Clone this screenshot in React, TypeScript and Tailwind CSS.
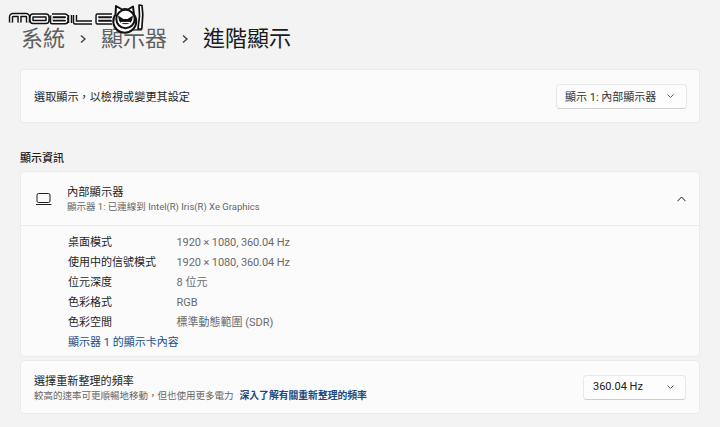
import React from "react";

const font = { fontFamily: 'Roboto, "Noto Sans CJK TC", "Noto Sans", sans-serif' };
const LETTERS =
  "M11 22.500V17a2 2 0 0 1 2-2h13a2 2 0 0 1 2 2v5.500M19.500 15.500V22.500M33 15.500h13a1.500 1.500 0 0 1 1.500 1.500v3.500a1.500 1.500 0 0 1-1.500 1.500H33a1.500 1.500 0 0 1-1.500-1.500V17a1.500 1.500 0 0 1 1.500-1.500zM52 15.500h13a1.700 1.700 0 0 1 0 3.400H53M53 18.900h12a1.700 1.700 0 0 1 0 3.400H52v-6.800M70 15v8M75 15v7.500h17M112 15.500H97.500v7H112M98 18.900h13";

function Logo() {
  return (
    <svg className="absolute left-0 top-0" width="150" height="34" viewBox="0 0 150 34" fill="none">
      <path d={LETTERS} stroke="#111" strokeWidth="4.400" strokeLinejoin="round" />
      <path d={LETTERS} stroke="#fff" strokeWidth="1.500" strokeLinejoin="round" />
      <path d="M116 6l6 3.500a11 11 0 0 1 6 0l5-3 1 8a11.500 11.500 0 1 1-18.500 0z" fill="#fff" stroke="#111" strokeWidth="2" strokeLinejoin="round" />
      <circle cx="125.500" cy="19" r="9.200" fill="#fff" stroke="#111" strokeWidth="2" />
      <path d="M118 15.500l5.500 3.500h4l5.500-3.500-1 5a7.500 7.500 0 0 1-13 0z" fill="#111" />
      <path d="M121 22.500h9" stroke="#fff" strokeWidth="1.200" />
      <path d="M139 5l3 .500.800 9-1 14.500h-3.800l1.500-13z" fill="#fff" stroke="#111" strokeWidth="1.700" strokeLinejoin="round" />
    </svg>
  );
}

function Chevron() {
  return (
    <svg width="7" height="4" viewBox="0 0 7 4" fill="none" className="shrink-0">
      <path d="M.5.5 3.500 3.500l3-3" stroke="#5c5c5c" strokeWidth="1" />
    </svg>
  );
}

function Crumb() {
  return (
    <svg width="6" height="32" viewBox="0 0 6 32" fill="none" className="mx-[15px] shrink-0">
      <path d="M1 12.500l4 3.500-4 3.500" stroke="#3f3f3f" strokeWidth="1.400" />
    </svg>
  );
}

function Row({ label, value, tight = false }: { label: string; value: string; tight?: boolean }) {
  return (
    <div className="flex h-[20px] items-center text-[11px]">
      <div className="w-[108.500px] text-[#1f1f1f]">{label}</div>
      <div className={tight ? "tracking-[-0.1px] text-[#6a6a6a]" : "text-[#6a6a6a]"}>{value}</div>
    </div>
  );
}

export default function App() {
  return (
    <div className="relative h-[427px] w-[720px] overflow-hidden bg-[#f3f3f3]" style={font}>
      <Logo />
      <div className="flex h-[69px] items-start pl-[21px] pt-[23px] text-[22px] leading-[32px]">
        <span className="text-[#5f5f5f]">系統</span>
        <Crumb />
        <span className="text-[#5f5f5f]">顯示器</span>
        <Crumb />
        <span className="text-[#1b1b1b]">進階顯示</span>
      </div>

      <div className="mx-[20px] flex h-[54px] items-center justify-between rounded-[4px] border border-[#ebebeb] bg-[#fbfbfb] pl-[13px] pr-[12px]">
        <span className="pt-[5px] text-[11.150px] text-[#1f1f1f]">選取顯示，以檢視或變更其設定</span>
        <div className="flex h-[25px] w-[131px] items-center justify-between rounded-[4px] border border-[#e8e8e8] border-b-[#cfcfcf] bg-[#fdfdfd] pl-[8px] pr-[12px] text-[11px] text-[#333]">
          <span className="pt-[5px]">顯示 1: 內部顯示器</span>
          <Chevron />
        </div>
      </div>

      <div className="ml-[20px] mt-[27px] h-[21px] text-[11px] font-medium leading-[18px] text-[#1b1b1b]">顯示資訊</div>

      <div className="mx-[20px] h-[186px] rounded-[4px] border border-[#ebebeb] bg-[#fbfbfb]">
        <div className="flex h-[54px] items-center border-b border-[#ebebeb] pr-[13px]">
          <svg width="18" height="14" viewBox="0 0 18 14" fill="none" className="ml-[14px] shrink-0">
            <rect x="2" y="1.500" width="13" height="9" rx="1.500" stroke="#1f1f1f" strokeWidth="1" />
            <path d="M1 12.500h15.500" stroke="#1f1f1f" strokeWidth="1" />
          </svg>
          <div className="ml-[14px] flex-1 pt-[2px]">
            <div className="text-[11.300px] leading-[14px] text-[#1f1f1f]">內部顯示器</div>
            <div className="text-[9.500px] leading-[14px] text-[#666]">顯示器 1: 已連線到 Intel(R) Iris(R) Xe Graphics</div>
          </div>
          <svg width="9" height="6" viewBox="0 0 9 6" fill="none" className="shrink-0">
            <path d="M.5 5.200 4.500 1l4 4.200" stroke="#1f1f1f" strokeWidth="1" />
          </svg>
        </div>
        <div className="pl-[47px] pt-[7.500px]">
          <Row label="桌面模式" value="1920 × 1080, 360.04 Hz" tight />
          <Row label="使用中的信號模式" value="1920 × 1080, 360.04 Hz" tight />
          <Row label="位元深度" value="8 位元" />
          <Row label="色彩格式" value="RGB" />
          <Row label="色彩空間" value="標準動態範圍 (SDR)" />
          <div className="flex h-[20px] items-center text-[11px] text-[#1a4f86]">顯示器 1 的顯示卡內容</div>
        </div>
      </div>

      <div className="mx-[20px] mt-[3px] flex h-[54px] items-center justify-between rounded-[4px] border border-[#ebebeb] bg-[#fbfbfb] pl-[13px] pr-[13px]">
        <div className="pt-[2px]">
          <div className="text-[11.100px] leading-[14px] text-[#1f1f1f]">選擇重新整理的頻率</div>
          <div className="text-[9.500px] leading-[13px] text-[#666]">
            較高的速率可更順暢地移動，但也使用更多電力
            <span className="ml-[6px] text-[9.800px] font-bold text-[#1a4a7e]">深入了解有關重新整理的頻率</span>
          </div>
        </div>
        <div className="flex h-[25px] w-[103px] items-center justify-between rounded-[4px] border border-[#e8e8e8] border-b-[#cfcfcf] bg-[#fdfdfd] pl-[9px] pr-[11px] text-[11px] text-[#222]">
          <span className="pt-[1px]">360.04 Hz</span>
          <Chevron />
        </div>
      </div>
    </div>
  );
}
